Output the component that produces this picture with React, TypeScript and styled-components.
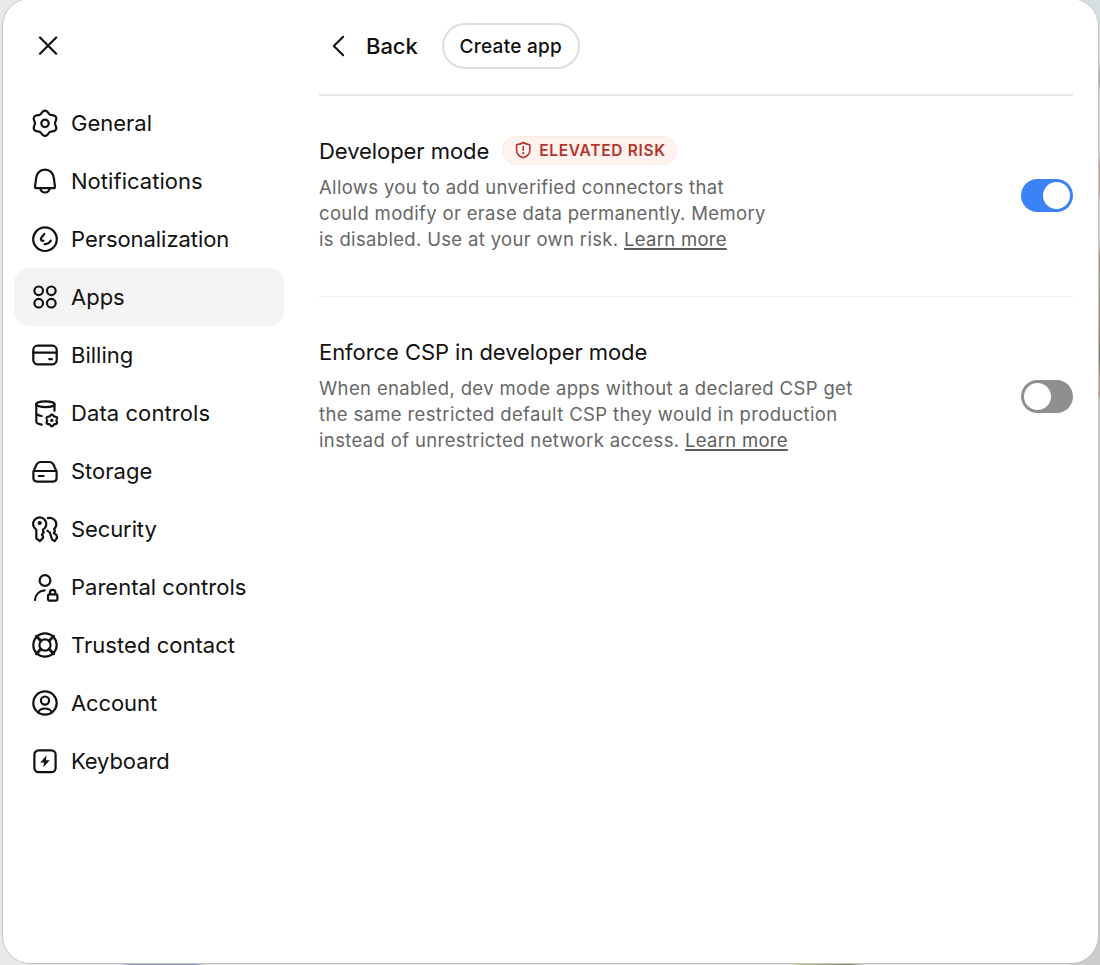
import { useState, type ReactNode } from "react";
import styled, { createGlobalStyle } from "styled-components";

const GlobalStyle = createGlobalStyle`
  * {
    box-sizing: border-box;
  }

  body {
    margin: 0;
    overflow: hidden;
    font-family: Inter, "Liberation Sans", sans-serif;
    color: #111;
  }

  button {
    font: inherit;
    color: inherit;
    letter-spacing: inherit;
    background: none;
    border: none;
    padding: 0;
    cursor: pointer;
  }
`;

const Backdrop = styled.div`
  height: 965px;
  padding: 0 1px 0 2px;
  overflow: hidden;
  background:
    linear-gradient(90deg, transparent 120px, #8f9bc4 130px 195px, transparent 205px 790px, #c3c98f 800px, #8a9070 850px, transparent 865px) 0 100% / 100% 2px no-repeat,
    linear-gradient(#d3dfe0 0 60px, #cfd3d3 66px, #a9adad 72px 84px, #d2d2d2 90px 155px, #c99a9a 165px 190px, #cfcfcf 200px 245px, #b58a80 255px, #8fa878 285px, #a08078 320px, #6f7a68 360px, #c09080 375px 395px, #cccccc 400px) 100% 0 / 30px 100% no-repeat,
    #e9e9e9;
`;

const Dialog = styled.div`
  display: flex;
  height: 966px;
  margin-top: -2px;
  background: #fff;
  border: 1px solid #c4c4c4;
  border-radius: 28px;
`;

const Sidebar = styled.aside`
  width: 316px;
  padding: 32px 35px 0 11px;
`;

const CloseButton = styled.button`
  display: flex;
  margin: 0 0 35px 20px;
`;

const NavList = styled.nav`
  display: flex;
  flex-direction: column;
`;

const NavItem = styled.button<{ $active: boolean }>`
  display: flex;
  align-items: center;
  gap: 12px;
  height: 58px;
  padding-left: 17px;
  border-radius: 15px;
  background: ${(p) => (p.$active ? "#f4f4f4" : "transparent")};
  font-size: 22px;
  text-align: left;
  white-space: nowrap;
`;

const NavLabel = styled.span<{ $spacing: number }>`
  letter-spacing: ${(p) => p.$spacing}px;
`;

const Icon = styled.svg<{ $stroke?: number }>`
  display: block;
  flex: none;
  overflow: visible;
  fill: none;
  stroke: currentColor;
  stroke-width: ${(p) => p.$stroke ?? 2.2};
  stroke-linecap: round;
  stroke-linejoin: round;

  .solid {
    fill: currentColor;
    stroke: none;
  }
`;

const Content = styled.main`
  flex: 1;
  padding-right: 25px;
`;

const Header = styled.header`
  display: flex;
  align-items: center;
  height: 97px;
  padding: 0 0 2px 6px;
  border-bottom: 2px solid #e8e8e8;
`;

const BackButton = styled.button`
  display: flex;
  align-items: center;
  gap: 13px;
  font-size: 22px;
  font-weight: 500;
  letter-spacing: -0.05px;
`;

const CreateButton = styled.button`
  width: 138px;
  height: 46px;
  margin-left: 24px;
  padding-top: 2px;
  border: 2px solid #dedede;
  border-radius: 23px;
  font-size: 19px;
  font-weight: 500;
  letter-spacing: 0.25px;
  white-space: nowrap;
`;

const Setting = styled.section<{ $divided?: boolean }>`
  display: flex;
  justify-content: space-between;
  height: 201px;
  padding-top: 41px;
  border-bottom: 1px solid ${(p) => (p.$divided ? "#f0f0f0" : "transparent")};
`;

const TitleRow = styled.div`
  display: flex;
  align-items: center;
  gap: 13px;
  height: 29px;
`;

const Title = styled.h2`
  margin: 0;
  font-size: 22px;
  font-weight: 400;
  line-height: 29px;
  letter-spacing: -0.06px;
  white-space: nowrap;
`;

const Badge = styled.span`
  display: flex;
  align-items: center;
  gap: 7px;
  width: 175px;
  height: 29px;
  margin-top: -3px;
  padding-left: 12px;
  border: 1px solid #fdeae3;
  border-radius: 15px;
  background: #fff3ef;
  color: #b3352c;
  font-size: 15.5px;
  font-weight: 600;
  letter-spacing: 0.68px;
  white-space: nowrap;
`;

const Description = styled.p<{ $width: number; $spacing: number }>`
  width: ${(p) => p.$width}px;
  margin: 8px 0 0;
  color: #676767;
  font-size: 18.5px;
  line-height: 26px;
  letter-spacing: ${(p) => p.$spacing}px;
`;

const Link = styled.a`
  color: #5d5d5d;
  letter-spacing: 0.28px;
  text-decoration: underline;
  text-decoration-thickness: 1.5px;
  text-underline-offset: 2px;
  cursor: pointer;
`;

const Switch = styled.button<{ $on: boolean }>`
  display: flex;
  justify-content: ${(p) => (p.$on ? "flex-end" : "flex-start")};
  width: 52px;
  height: 33px;
  margin-top: 42px;
  padding: 3px;
  border-radius: 17px;
  background: ${(p) => (p.$on ? "#3b82f6" : "#8f8f8f")};
`;

const Knob = styled.span`
  width: 27px;
  height: 27px;
  border-radius: 50%;
  background: #fff;
`;

// six-lobed cog outline around (cx, cy)
function cog(cx: number, cy: number, r: number, depth: number) {
  const points: string[] = [];
  for (let i = 0; i < 120; i++) {
    const a = (i / 120) * Math.PI * 2;
    const d = r - depth * Math.cos(6 * a);
    points.push(`${(cx + d * Math.cos(a)).toFixed(2)} ${(cy + d * Math.sin(a)).toFixed(2)}`);
  }
  return `M${points.join("L")}Z`;
}

interface NavEntry {
  label: string;
  spacing: number;
  icon: ReactNode;
}

const entries: NavEntry[] = [
  {
    label: "General",
    spacing: 0,
    icon: (
      <>
        <path d={cog(14, 14.3, 11.3, 1.3)} />
        <circle cx="14" cy="14.3" r="3.7" />
      </>
    ),
  },
  {
    label: "Notifications",
    spacing: 0.04,
    icon: (
      <>
        <path d="M14 2.7c-5 0-8.6 3.6-8.9 8.5L4 20.2c0 .5.3.9.8.9h18.4c.5 0 .9-.4.8-.9l-1.1-9C22.6 6.3 19 2.7 14 2.7Z" />
        <path d="M9.2 21.5c.7 2.5 2.6 4 4.8 4s4.1-1.5 4.8-4" />
      </>
    ),
  },
  {
    label: "Personalization",
    spacing: -0.05,
    icon: (
      <>
        <circle cx="14" cy="14.2" r="11.8" />
        <path d="M13.3 8.8 10.2 12.8Q9 15.7 12.4 15.8M13.6 19.1Q17.9 19.4 19.8 15.6" />
      </>
    ),
  },
  {
    label: "Apps",
    spacing: 0,
    icon: (
      <>
        <circle cx="7.7" cy="7.8" r="4.3" />
        <circle cx="20.3" cy="7.8" r="4.3" />
        <circle cx="7.7" cy="20.2" r="4.3" />
        <circle cx="20.3" cy="20.2" r="4.3" />
      </>
    ),
  },
  {
    label: "Billing",
    spacing: 0,
    icon: (
      <>
        <rect x="2.3" y="4.7" width="23.4" height="18.6" rx="4.2" />
        <path d="M2.3 11.6h23.4M18.3 18.2h2.6" />
      </>
    ),
  },
  {
    label: "Data controls",
    spacing: 0.08,
    icon: (
      <>
        <ellipse cx="14.4" cy="5.2" rx="9.1" ry="2.9" />
        <path d="M5.3 5.2v17.6c0 1.3 2 2.3 5.4 2.8M5.3 14c0 1.3 2 2.5 5.4 3M23.5 5.2v6.6" />
        <path d={cog(20.8, 21.4, 5.2, 0.6)} />
        <circle className="solid" cx="20.8" cy="21.4" r="1.7" />
      </>
    ),
  },
  {
    label: "Storage",
    spacing: 0,
    icon: (
      <>
        <path d="M2.4 14.6 5.3 8C6.3 5.9 7.6 5 9.8 5h8.4c2.2 0 3.5.9 4.5 3l2.9 6.6v6.2c0 2.5-1.3 3.8-3.8 3.8H6.2c-2.5 0-3.8-1.3-3.8-3.8ZM2.6 14h22.8M7.8 19h4.8" />
      </>
    ),
  },
  {
    label: "Security",
    spacing: -0.1,
    icon: (
      <>
        <path d="M5.3 14.6A6.6 6.6 0 1 1 12.1 14.6V16.4L12.8 17.4 10.9 19.8 12 21.4V23L8.8 26.1 5.3 23.3Z" />
        <circle className="solid" cx="8.7" cy="8" r="2.1" />
        <path d="M16.8 3.1c4.9-1 8.9 2.5 8.5 6.8-.2 1.8-1 3-2.1 3.9l.7 2.2-1.1 2.2 2.5 1.7.9 2.7-2.5 3.6-2.6-1.7-2.3-7c-1-.4-1.8-1-2.4-1.8" />
      </>
    ),
  },
  {
    label: "Parental controls",
    spacing: 0,
    icon: (
      <>
        <circle cx="14" cy="7.5" r="5.4" />
        <path d="M4 27c.4-5.2 4-9.2 9.6-9.6" />
        <rect x="17" y="21.4" width="9.4" height="6.2" rx="1.3" />
        <path d="M18.9 21.2v-1.5a2.75 2.75 0 0 1 5.5 0v1.5" />
      </>
    ),
  },
  {
    label: "Trusted contact",
    spacing: 0.04,
    icon: (
      <>
        <circle cx="14" cy="14" r="11.7" />
        <circle cx="14" cy="14" r="5.6" />
        <path strokeWidth="2.9" d="m5.3 5.3 4.5 4.5M22.7 5.3l-4.5 4.5M5.3 22.7l4.5-4.5M22.7 22.7l-4.5-4.5" />
      </>
    ),
  },
  {
    label: "Account",
    spacing: -0.1,
    icon: (
      <>
        <circle cx="14" cy="14" r="11.7" />
        <circle cx="14" cy="11.6" r="4.1" />
        <path d="M7 23.2c1.4-2.3 4-3.7 7-3.7s5.6 1.4 7 3.7" />
      </>
    ),
  },
  {
    label: "Keyboard",
    spacing: -0.1,
    icon: (
      <>
        <rect x="3.4" y="3.4" width="21.2" height="21.8" rx="4.2" />
        <path className="solid" d="M15.6 8.2 9.3 15.4H13L12.3 20.6 18.7 13.3H14.9Z" />
      </>
    ),
  },
];

interface ToggleProps {
  label: string;
  initial: boolean;
}

function Toggle({ label, initial }: ToggleProps) {
  const [on, setOn] = useState(initial);

  return (
    <Switch $on={on} role="switch" aria-checked={on} aria-label={label} onClick={() => setOn(!on)}>
      <Knob />
    </Switch>
  );
}

function App() {
  const [active, setActive] = useState("Apps");

  return (
    <>
      <GlobalStyle />
      <Backdrop>
        <Dialog>
          <Sidebar>
            <CloseButton aria-label="Close">
              <Icon width="28" height="28" viewBox="0 0 28 28">
                <path d="m6 6.5 16.2 16.2M22.2 6.5 6 22.7" />
              </Icon>
            </CloseButton>
            <NavList>
              {entries.map((entry) => (
                <NavItem key={entry.label} $active={entry.label === active} onClick={() => setActive(entry.label)}>
                  <Icon width="28" height="28" viewBox="0 0 28 28">
                    {entry.icon}
                  </Icon>
                  <NavLabel $spacing={entry.spacing}>{entry.label}</NavLabel>
                </NavItem>
              ))}
            </NavList>
          </Sidebar>
          <Content>
            <Header>
              <BackButton>
                <Icon $stroke={2} width="28" height="28" viewBox="0 0 28 28">
                  <path d="M18.2 4.7 8.8 14l9.4 9.3" />
                </Icon>
                Back
              </BackButton>
              <CreateButton>Create app</CreateButton>
            </Header>
            <Setting $divided>
              <div>
                <TitleRow>
                  <Title>Developer mode</Title>
                  <Badge>
                    <Icon $stroke={1.6} width="17" height="18" viewBox="0 0 17 18">
                      <path d="M8.2 1.5c2.2 1.6 4.200 1.900 6.600 2.200v5.600c0 3.800-2.700 6.300-6.600 7.500-3.900-1.200-6.600-3.700-6.600-7.500V3.700c2.400-.3 4.400-.6 6.600-2.200ZM8.200 5.600v3.700" />
                      <circle className="solid" cx="8.2" cy="12.2" r="1.1" />
                    </Icon>
                    ELEVATED RISK
                  </Badge>
                </TitleRow>
                <Description $width={456} $spacing={0.33}>
                  Allows you to add unverified connectors that could modify or erase data permanently. Memory is
                  disabled. Use at your own risk. <Link>Learn more</Link>
                </Description>
              </div>
              <Toggle label="Developer mode" initial={true} />
            </Setting>
            <Setting>
              <div>
                <TitleRow>
                  <Title>Enforce CSP in developer mode</Title>
                </TitleRow>
                <Description $width={550} $spacing={0.36}>
                  When enabled, dev mode apps without a declared CSP get the same restricted default CSP they would in
                  production instead of unrestricted network access. <Link>Learn more</Link>
                </Description>
              </div>
              <Toggle label="Enforce CSP in developer mode" initial={false} />
            </Setting>
          </Content>
        </Dialog>
      </Backdrop>
    </>
  );
}

export default App;
